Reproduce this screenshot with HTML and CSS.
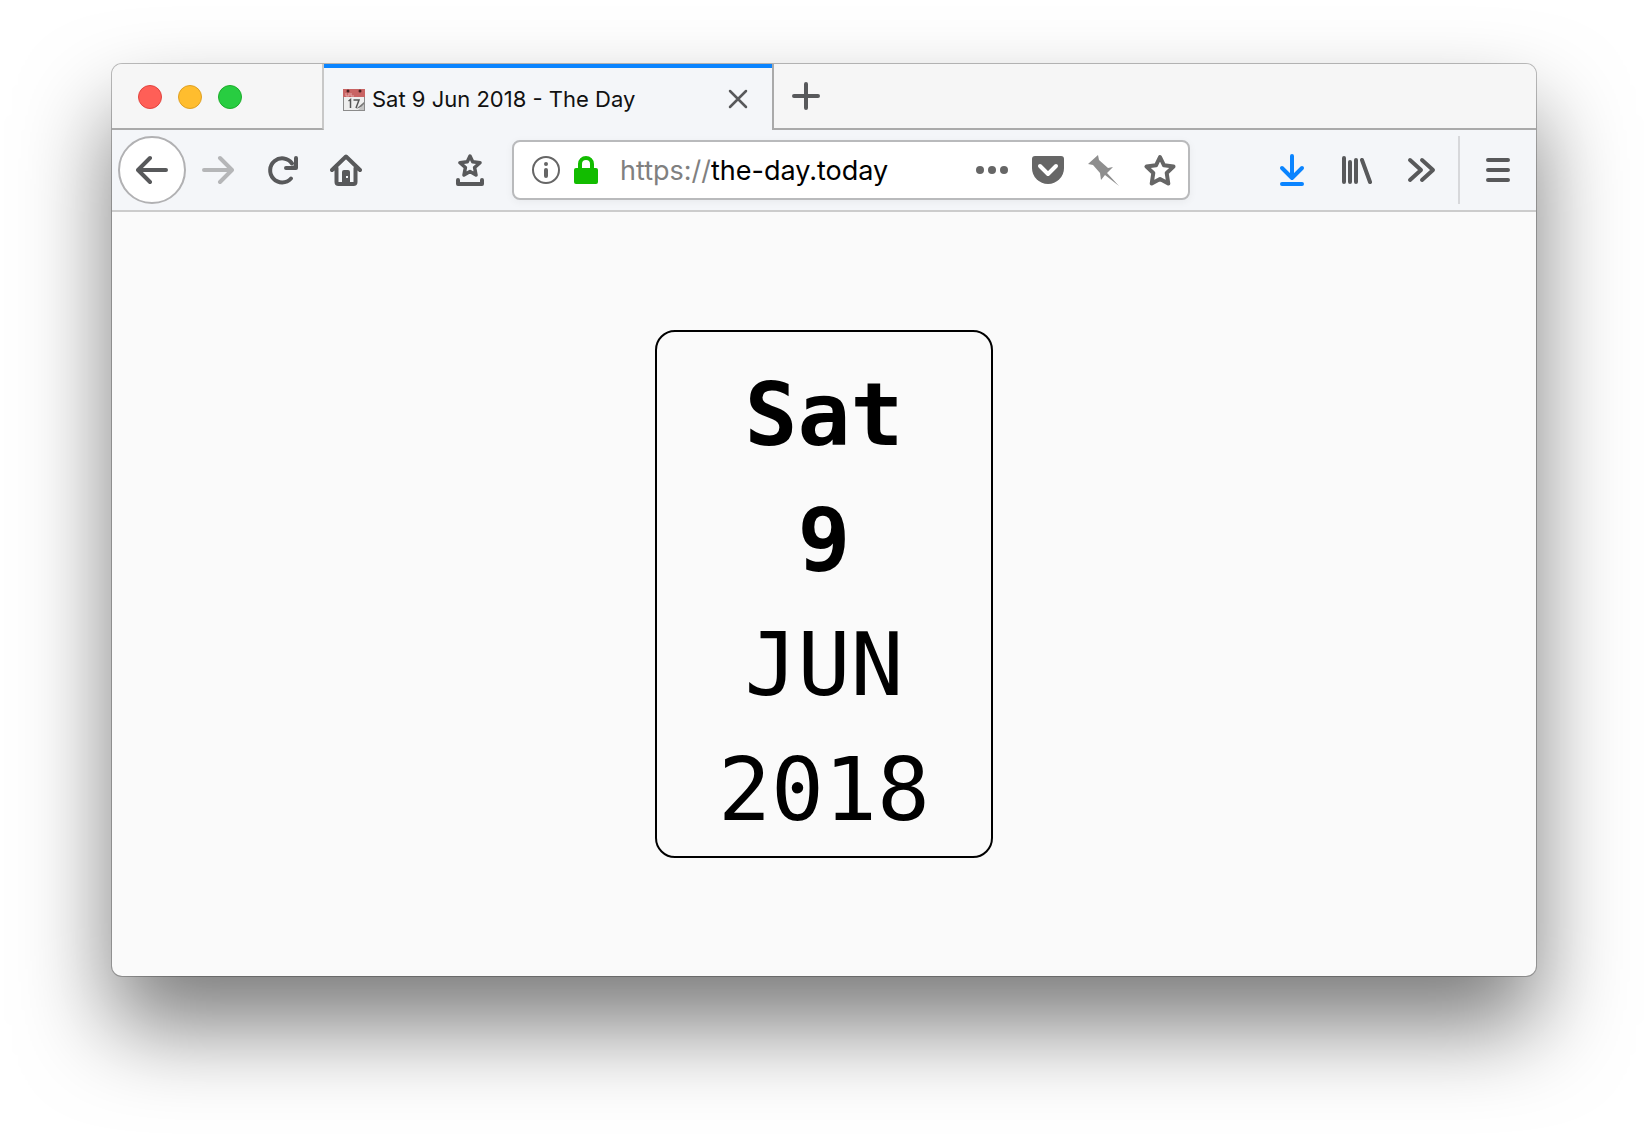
FILE: index.html
```html
<!DOCTYPE html>
<html lang="en">
<head>
    <meta charset="UTF-8">
    <meta name="viewport" content="width=device-width, initial-scale=1.0">
    <title>Sat 9 Jun 2018 - The Day</title>
    <link rel="stylesheet" href="styles.css">
</head>
<body>
    <div class="window">
        <!-- Tab strip -->
        <div class="tab-strip">
            <div class="window-controls">
                <button class="dot dot-close" aria-label="Close window"></button>
                <button class="dot dot-minimize" aria-label="Minimize window"></button>
                <button class="dot dot-zoom" aria-label="Zoom window"></button>
            </div>
            <div class="tab">
                <svg class="favicon" viewBox="0 0 22 23" aria-hidden="true">
                    <rect x=".5" y="1.5" width="21" height="21" fill="#eeeeee" stroke="#8b8b8b"/>
                    <path d="M0 1h22v8H0z" fill="#c96464"/>
                    <path d="M3 5v3h3V5M8 5v3h3" fill="none" stroke="#e5aaaa"/>
                    <circle cx="5" cy="3" r="1.5" fill="#4a2020"/>
                    <circle cx="17" cy="3" r="1.5" fill="#4a2020"/>
                    <path d="M5.5 13l2-1.5V20M10.5 12H16l-3 8" fill="none" stroke="#555555" stroke-width="1.5"/>
                    <path d="M21 14l-8 7 8-3z" fill="#777777"/>
                    <path d="M15 22l6-6v6z" fill="#c4c4c4"/>
                </svg>
                <span class="tab-title">Sat 9 Jun 2018 - The Day</span>
                <button class="tab-close" aria-label="Close tab">
                    <svg viewBox="0 0 20 20"><path d="M2 2l16 16M18 2L2 18" fill="none" stroke="currentColor" stroke-width="2.5" stroke-linecap="round"/></svg>
                </button>
            </div>
            <div class="strip-rest">
                <button class="new-tab" aria-label="New tab">
                    <svg viewBox="0 0 28 28"><path d="M14 2v24M2 14h24" fill="none" stroke="currentColor" stroke-width="4" stroke-linecap="round"/></svg>
                </button>
            </div>
        </div>

        <!-- Toolbar -->
        <div class="toolbar">
            <button class="back" aria-label="Back">
                <svg class="icon line" viewBox="0 0 32 32"><path d="M30 16H3M14 4L2 16l12 12"/></svg>
            </button>
            <button class="tool" aria-label="Forward" disabled>
                <svg class="icon line" viewBox="0 0 32 32"><path d="M2 16h27M18 4l12 12-12 12"/></svg>
            </button>
            <button class="tool" aria-label="Reload">
                <svg class="icon line" viewBox="0 0 32 32">
                    <path d="M25 24.5A12 12 0 1 1 26 9.5"/>
                    <path d="M30 4v10H20"/>
                    <path d="M30 9v5h-5z" fill="currentColor" stroke="none"/>
                </svg>
            </button>
            <button class="tool" aria-label="Home">
                <svg class="icon line" viewBox="0 0 32 32">
                    <path d="M2 16L16 2.5 30 16M6.5 14v14a2 2 0 0 0 2 2h15a2 2 0 0 0 2-2V14"/>
                    <path d="M12 29V18a2 2 0 0 1 2-2h4a2 2 0 0 1 2 2v11z" fill="currentColor" stroke="none"/>
                    <path d="M16 22h2v2h-2z" fill="#f4f6f9" stroke="none"/>
                </svg>
            </button>
            <div class="spacer"></div>
            <button class="tool" aria-label="Bookmarks">
                <svg class="icon line" viewBox="0 0 32 32">
                    <path d="M4 26v4h24v-4"/>
                    <path d="M16 2l2.700 5.700 7.300 1-5.400 4.800 1.400 7.500-6-3.500-6 3.500 1.400-7.500L6 8.700l7.300-1z" stroke-width="3.500"/>
                </svg>
            </button>
            <div class="url-bar">
                <button class="url-icon" aria-label="Site information">
                    <svg class="icon" viewBox="0 0 32 32">
                        <circle cx="16" cy="16" r="13" fill="none" stroke="currentColor" stroke-width="2"/>
                        <circle cx="16" cy="10" r="2" fill="currentColor"/>
                        <rect x="14" y="14" width="4" height="10" rx="2" fill="currentColor"/>
                    </svg>
                </button>
                <button class="url-icon secure" aria-label="Secure connection">
                    <svg class="icon" viewBox="0 0 32 32">
                        <path d="M10 15v-5a6 6 0 0 1 12 0v5" fill="none" stroke="currentColor" stroke-width="4"/>
                        <rect x="4" y="14" width="24" height="16" rx="2" fill="currentColor"/>
                    </svg>
                </button>
                <label class="scheme" for="url">https://</label>
                <input class="url-input" id="url" type="text" value="the-day.today" spellcheck="false">
                <button class="url-action" aria-label="Page actions">
                    <svg class="icon" viewBox="0 0 32 32" fill="currentColor"><circle cx="4" cy="16" r="4"/><circle cx="16" cy="16" r="4"/><circle cx="28" cy="16" r="4"/></svg>
                </button>
                <button class="url-action" aria-label="Save to Pocket">
                    <svg class="icon" viewBox="0 0 32 32">
                        <path d="M3 2h26a3 3 0 0 1 3 3v9a16 16 0 0 1-32 0V5a3 3 0 0 1 3-3z" fill="currentColor"/>
                        <path d="M8 12l8 8 8-8" fill="none" stroke="#ffffff" stroke-width="4" stroke-linecap="round" stroke-linejoin="round"/>
                    </svg>
                </button>
                <button class="url-action pin" aria-label="Pin">
                    <svg class="icon" viewBox="0 0 32 32"><path d="M10 1l1 5 9 8 5-1-6 6 12 13-14-11-4 5-1-7-7-8-5-1z" fill="currentColor"/></svg>
                </button>
                <button class="url-action" aria-label="Bookmark this page">
                    <svg class="icon line" viewBox="0 0 32 32"><path d="M16 3l4 8.300 9.500 1.300-6.800 6.400 1.600 10.500L16 25l-8.300 4.500L9.300 19l-6.800-6.400L12 11.300z"/></svg>
                </button>
            </div>
            <div class="spacer spacer-end"></div>
            <button class="tool download" aria-label="Downloads">
                <svg class="icon line" viewBox="0 0 32 32"><path d="M16 2v22M6 14l10 10 10-10M6 30h20"/></svg>
            </button>
            <button class="tool" aria-label="Library">
                <svg class="icon line" viewBox="0 0 32 32"><path d="M4 4v24M10 8v20M16 6v22M22 6l8 22"/></svg>
            </button>
            <button class="tool" aria-label="More tools">
                <svg class="icon line" viewBox="0 0 32 32"><path d="M6 6l11 10L6 26M18 6l11 10-11 10"/></svg>
            </button>
            <div class="separator"></div>
            <button class="tool" aria-label="Open menu">
                <svg class="icon line" viewBox="0 0 32 32"><path d="M6 6h20M6 16h20M6 26h20"/></svg>
            </button>
        </div>

        <!-- Page -->
        <main class="page">
            <time class="card" datetime="2018-06-09">
                <strong>Sat</strong>
                <strong>9</strong>
                <span>JUN</span>
                <span>2018</span>
            </time>
        </main>
    </div>
</body>
</html>
```
FILE: styles.css
```css
* {
    box-sizing: border-box;
}

body {
    margin: 0;
    min-height: 100vh;
    padding: 64px 112px 160px;
    display: flex;
    background: white;
    font-family: Inter, Roboto, sans-serif;
    overflow: hidden;
}

button {
    display: flex;
    align-items: center;
    justify-content: center;
    flex: none;
    padding: 0;
    border: none;
    background: none;
    color: inherit;
}

.window {
    flex: 1;
    min-width: 0;
    display: flex;
    flex-direction: column;
    border-radius: 10px;
    overflow: hidden;
    background: #fafafa;
    color: #58595b;
    box-shadow: 0 0 0 1px rgba(0, 0, 0, 0.25), 0 50px 90px rgba(0, 0, 0, 0.52);
}

/* Tab strip */
.tab-strip {
    display: flex;
    height: 66px;
    background: #f6f6f6;
}

.window-controls {
    display: flex;
    align-items: center;
    gap: 16px;
    width: 212px;
    padding: 2px 0 0 26px;
    border-right: 2px solid #c8c8c8;
    border-bottom: 2px solid #aaaaaa;
}

.dot {
    width: 24px;
    height: 24px;
    border-radius: 50%;
    border: 1px solid;
}

.dot-close {
    background: #ff5f57;
    border-color: #e2443f;
}

.dot-minimize {
    background: #ffbd2e;
    border-color: #dfa023;
}

.dot-zoom {
    background: #28cd41;
    border-color: #1dad2b;
}

.tab {
    display: flex;
    align-items: center;
    gap: 7px;
    width: 448px;
    padding: 0 12px 0 19px;
    border-top: 4px solid #0a84ff;
    background: #f4f6f9;
}

.favicon {
    width: 22px;
    height: 23px;
}

.tab-title {
    flex: 1;
    font-size: 22px;
    color: #111111;
    white-space: nowrap;
}

.tab-close {
    width: 44px;
    height: 44px;
}

.tab-close svg {
    width: 20px;
    height: 20px;
}

.strip-rest {
    flex: 1;
    display: flex;
    border-left: 2px solid #aaaaaa;
    border-bottom: 2px solid #aaaaaa;
}

.new-tab {
    width: 64px;
}

.new-tab svg {
    width: 28px;
    height: 28px;
}

/* Toolbar */
.toolbar {
    display: flex;
    align-items: center;
    height: 82px;
    padding: 0 6px;
    background: #f4f6f9;
    border-bottom: 2px solid #cccccc;
}

.icon {
    width: 32px;
    height: 32px;
}

.line {
    fill: none;
    stroke: currentColor;
    stroke-width: 4px;
    stroke-linecap: round;
    stroke-linejoin: round;
}

.back {
    width: 68px;
    height: 68px;
    border: 2px solid #b1b1b3;
    border-radius: 50%;
    background: white;
}

.tool {
    width: 64px;
    height: 64px;
}

.tool:disabled {
    color: #b5b6b8;
}

.spacer {
    flex: 0 1 60px;
}

.spacer-end {
    flex-basis: 70px;
}

.download {
    color: #0a84ff;
}

.separator {
    width: 2px;
    height: 68px;
    margin: 0 6px;
    background: #d7d8db;
}

/* Address bar */
.url-bar {
    flex: 1;
    min-width: 0;
    display: flex;
    align-items: center;
    height: 60px;
    margin-left: 10px;
    padding-left: 12px;
    border: 2px solid #b9babc;
    border-radius: 8px;
    background: white;
    color: #666666;
    box-shadow: 0 2px 8px rgba(0, 0, 0, 0.05);
}

.url-icon {
    width: 40px;
    height: 56px;
}

.secure {
    color: #12bc00;
}

.scheme {
    margin-left: 14px;
    font-size: 27px;
    color: #808080;
}

.url-input {
    flex: 1;
    min-width: 0;
    padding: 0;
    border: none;
    outline: none;
    background: none;
    font-family: inherit;
    font-size: 27px;
    color: black;
}

.url-action {
    width: 56px;
    height: 56px;
}

.pin {
    color: #8e8e8e;
}

/* Date card */
.page {
    flex: 1;
    display: flex;
    align-items: center;
    justify-content: center;
}

.card {
    display: flex;
    flex-direction: column;
    align-items: center;
    padding: 20px 61px 4px;
    border: 2px solid black;
    border-radius: 20px;
    color: black;
    font-family: "DejaVu Sans Mono", monospace;
    font-size: 88px;
    line-height: 125px;
}
```
